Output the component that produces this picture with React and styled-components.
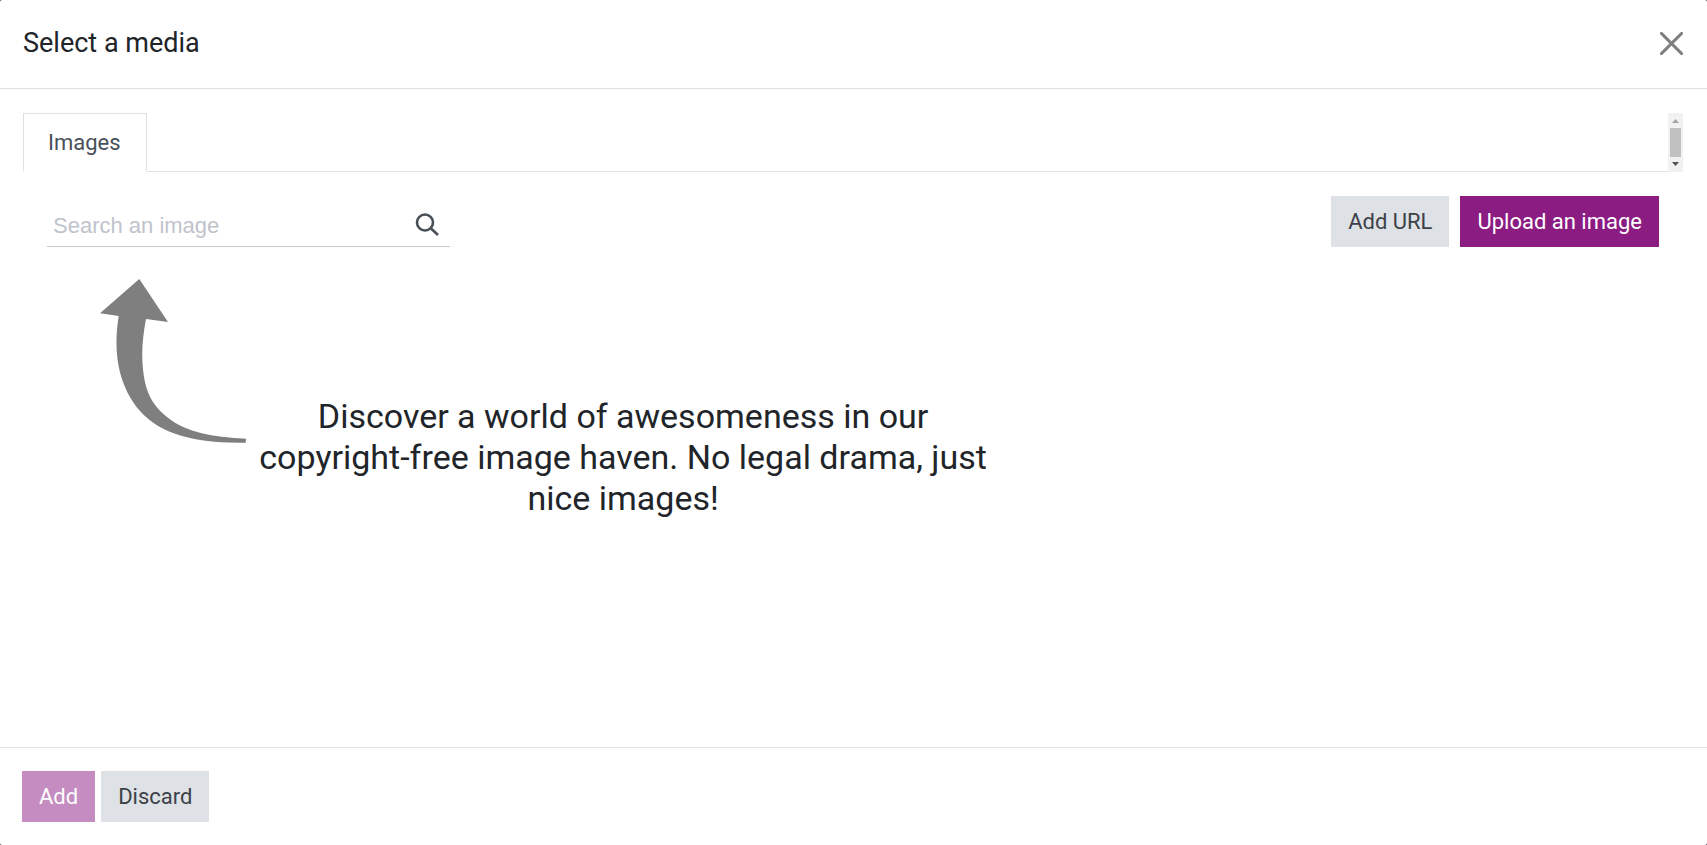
import React from 'react';
import styled, {createGlobalStyle} from 'styled-components';

const GlobalStyle = createGlobalStyle`
  *, *::before, *::after {
    box-sizing: border-box;
  }

  body {
    margin: 0;
    background-color: #4a3a48;
    color: #212529;
    font-family: Roboto, "Liberation Sans", sans-serif;
    font-size: 22px;
    line-height: 33px;
  }
`;

const Modal = styled.div`
  display: flex;
  flex-direction: column;
  min-height: 100vh;
  background-color: #fff;
  border-radius: 2px;
`;

const Header = styled.header`
  display: flex;
  align-items: center;
  justify-content: space-between;
  padding: 22px 24px 24px 23px;
  border-bottom: 1px solid #dee2e6;
`;

const Title = styled.h4`
  margin: 0;
  font-size: 27px;
  font-weight: 400;
  line-height: 42px;
`;

const CloseButton = styled.button`
  display: flex;
  padding: 0;
  border: 0;
  background: none;
  color: #7f7f7f;
  cursor: pointer;
`;

const Body = styled.main`
  flex: 1;
  padding: 24px 24px 24px 23px;
`;

const TabBar = styled.nav`
  display: flex;
  justify-content: space-between;
`;

const Tabs = styled.div`
  display: flex;
  flex: 1;

  &::after {
    content: '';
    flex: 1;
    border-bottom: 1px solid #dee2e6;
  }
`;

const Tab = styled.a`
  padding: 12px 25px 12px 24px;
  border: 1px solid #dee2e6;
  border-bottom-color: #fff;
  color: #495057;
  text-decoration: none;
`;

const Scrollbar = styled.div`
  display: flex;
  flex-direction: column;
  align-items: center;
  width: 15px;
  background-color: #f1f1f1;
`;

const ScrollArrow = styled.svg`
  width: 15px;
  height: 15px;
  fill: ${({$disabled}) => ($disabled ? '#a3a3a3' : '#505050')};
`;

const ScrollThumb = styled.div`
  flex: 1;
  width: 11px;
  background-color: #c1c1c1;
`;

const Panel = styled.section`
  padding: 24px;
`;

const Toolbar = styled.div`
  display: flex;
  align-items: flex-end;
  justify-content: space-between;
`;

const SearchBox = styled.form`
  display: flex;
  align-items: center;
  width: 25%;
  height: 51px;
  padding: 8px 10px 0 6px;
  border-bottom: 1px solid #c8c9cc;
`;

const SearchInput = styled.input`
  flex: 1;
  min-width: 0;
  padding: 0;
  border: 0;
  outline: 0;
  background: none;
  color: #495057;
  font-family: "Liberation Sans", Arial, sans-serif;
  font-size: 22px;
  line-height: 33px;

  &::placeholder {
    color: #c0c3cb;
    opacity: 1;
  }
`;

const SearchButton = styled(CloseButton)`
  color: #495057;
`;

const Actions = styled.div`
  display: flex;
  gap: ${({$gap}) => $gap};
`;

const Button = styled.button`
  padding: 9px 17px;
  border: 0;
  background-color: ${({$primary}) => ($primary ? '#8a1c82' : '#dee2e6')};
  color: ${({$primary}) => ($primary ? '#fff' : '#3c4147')};
  font-family: inherit;
  font-size: 22px;
  line-height: 33px;
  cursor: pointer;

  &:disabled {
    opacity: 0.5;
    cursor: default;
  }
`;

const Hero = styled.div`
  display: flex;
  align-items: flex-start;
  width: 60%;
  padding: 32px 14px 0 53px;
`;

const HeroArrow = styled.svg`
  flex: none;
  width: 146px;
  height: 164px;
  fill: #7f7f7f;
`;

const HeroText = styled.h2`
  flex: 1;
  margin: 117px 0 0;
  font-size: 34px;
  font-weight: 400;
  line-height: 41px;
  text-align: center;
`;

const Footer = styled.footer`
  padding: 23px 22px;
  border-top: 1px solid #dee2e6;
`;

const MediaTabs = () => (
  <TabBar>
    <Tabs>
      <Tab href="#images">Images</Tab>
    </Tabs>
    <Scrollbar aria-hidden="true">
      <ScrollArrow $disabled viewBox="0 0 15 15">
        <path d="M4 10 7.5 6 11 10z" />
      </ScrollArrow>
      <ScrollThumb />
      <ScrollArrow viewBox="0 0 15 15">
        <path d="M4 5 7.5 9 11 5z" />
      </ScrollArrow>
    </Scrollbar>
  </TabBar>
);

const Search = () => (
  <SearchBox onSubmit={e => e.preventDefault()}>
    <SearchInput type="text" aria-label="Search an image" placeholder="Search an image" />
    <SearchButton type="submit" aria-label="Search">
      <svg width="26" height="26" viewBox="0 0 26 26" fill="none" stroke="currentColor" strokeWidth="2.6">
        <circle cx="11" cy="10.5" r="8" />
        <path d="M16.5 16 24 23" />
      </svg>
    </SearchButton>
  </SearchBox>
);

const App = () => (
  <>
    <GlobalStyle />
    <Modal role="dialog" aria-label="Select a media">
      <Header>
        <Title>Select a media</Title>
        <CloseButton type="button" aria-label="Close">
          <svg width="23" height="23" viewBox="0 0 23 23" stroke="currentColor" strokeWidth="2.9" strokeLinecap="round">
            <path d="M1.4 1.4 21.6 21.6M21.6 1.4 1.4 21.6" />
          </svg>
        </CloseButton>
      </Header>
      <Body>
        <MediaTabs />
        <Panel id="images">
          <Toolbar>
            <Search />
            <Actions $gap="11px">
              <Button type="button">Add URL</Button>
              <Button type="button" $primary>Upload an image</Button>
            </Actions>
          </Toolbar>
          <Hero>
            <HeroArrow viewBox="0 0 146 164" aria-hidden="true">
              <path d="M39.3 0 68 43 46 40C42.5 58 41.5 73 42.8 88C45 114 53 128 71 141C88 153 111 158 146 159.7L145.7 163.7C117 164.2 94 161.5 73 154C49 145 34 129 25 108C16 87 14.5 63 18.7 37L0 34.3z" />
            </HeroArrow>
            <HeroText>
              Discover a world of awesomeness in our copyright-free image haven. No legal drama, just nice images!
            </HeroText>
          </Hero>
        </Panel>
      </Body>
      <Footer>
        <Actions $gap="6px">
          <Button type="button" $primary disabled>Add</Button>
          <Button type="button">Discard</Button>
        </Actions>
      </Footer>
    </Modal>
  </>
);

export default App;
